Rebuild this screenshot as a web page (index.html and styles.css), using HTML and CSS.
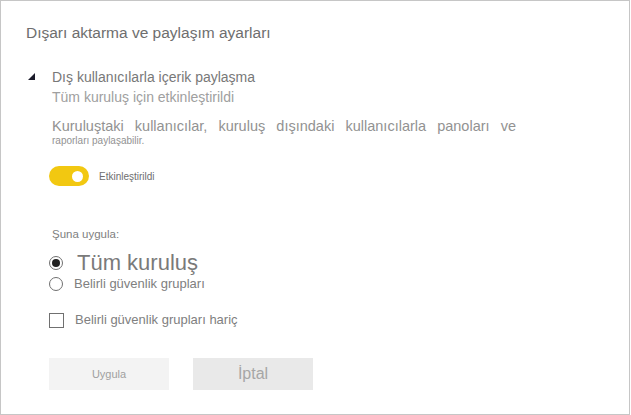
FILE: index.html
```html
<!DOCTYPE html>
<html lang="tr">
<head>
<meta charset="utf-8">
<link rel="stylesheet" href="styles.css">
</head>
<body>
<div class="panel">
  <h1 class="title">Dışarı aktarma ve paylaşım ayarları</h1>
  <div class="section">
    <div class="caret"><svg width="7" height="7" viewBox="0 0 7 7"><polygon points="7,0 7,7 0,7" fill="#1b1b2a"/></svg></div>
    <div class="section-body">
      <div class="section-name">Dış kullanıcılarla içerik paylaşma</div>
      <div class="section-state">Tüm kuruluş için etkinleştirildi</div>
      <div class="desc">Kuruluştaki kullanıcılar, kuruluş dışındaki kullanıcılarla panoları ve</div>
      <div class="desc-small">raporları paylaşabilir.</div>
    </div>
  </div>
  <div class="toggle-row">
    <span class="toggle"><span class="knob"></span></span>
    <span class="toggle-label">Etkinleştirildi</span>
  </div>
  <div class="apply-label">Şuna uygula:</div>
  <div class="option option-big">
    <span class="radio checked"></span>
    <span class="big-label">Tüm kuruluş</span>
  </div>
  <div class="option option-second">
    <span class="radio"></span>
    <span class="opt-label">Belirli güvenlik grupları</span>
  </div>
  <div class="option option-check">
    <span class="check"></span>
    <span class="opt-label">Belirli güvenlik grupları hariç</span>
  </div>
  <div class="buttons">
    <button class="btn btn-apply">Uygula</button>
    <button class="btn btn-cancel">İptal</button>
  </div>
</div>
</body>
</html>
```
FILE: styles.css
```css
html, body {
  margin: 0;
  padding: 0;
  background: #fff;
}
body {
  font-family: "Liberation Sans", Arial, sans-serif;
  color: #7a7a7a;
}
.panel {
  width: 630px;
  height: 415px;
  box-sizing: border-box;
  border: 1px solid #c6c6c6;
  padding: 22px 0 0 25px;
}
.title {
  margin: 0;
  font-size: 15.5px;
  font-weight: normal;
  line-height: 20px;
  color: #6e6e6e;
}
.section {
  display: flex;
  margin-top: 24px;
  margin-left: 2px;
}
.caret {
  width: 24px;
  padding-top: 6px;
}
.caret svg { display: block; }
.section-body {
  display: flex;
  flex-direction: column;
}
.section-name {
  font-size: 14px;
  line-height: 20px;
  color: #787878;
}
.section-state {
  font-size: 14px;
  line-height: 20px;
  color: #a0a0a0;
}
.desc {
  margin-top: 10px;
  width: 464px;
  font-size: 14.5px;
  line-height: 18px;
  color: #929292;
  text-align: justify;
  text-align-last: justify;
}
.desc-small {
  font-size: 10px;
  line-height: 12px;
  color: #929292;
}
.toggle-row {
  display: flex;
  align-items: center;
  gap: 10px;
  margin-top: 19px;
  margin-left: 23px;
}
.toggle {
  display: flex;
  justify-content: flex-end;
  align-items: center;
  width: 40px;
  height: 20px;
  box-sizing: border-box;
  padding-right: 6px;
  border-radius: 10px;
  background: #f2c811;
}
.knob {
  width: 11px;
  height: 11px;
  border-radius: 50%;
  background: #fff;
}
.toggle-label {
  font-size: 10px;
  color: #6e6e6e;
}
.apply-label {
  margin-top: 41px;
  margin-left: 26px;
  font-size: 11.5px;
  line-height: 14px;
  color: #808080;
}
.option {
  display: flex;
  align-items: center;
  gap: 11px;
  margin-left: 23px;
}
.option-big {
  margin-top: 11px;
  gap: 14px;
}
.option-second {
  margin-top: 2px;
}
.option-check {
  margin-top: 20px;
}
.radio {
  width: 14px;
  height: 14px;
  box-sizing: border-box;
  border: 1px solid #707070;
  border-radius: 50%;
  display: flex;
  align-items: center;
  justify-content: center;
}
.radio.checked::after {
  content: "";
  width: 8px;
  height: 8px;
  border-radius: 50%;
  background: #222;
}
.check {
  width: 15px;
  height: 15px;
  box-sizing: border-box;
  border: 1px solid #707070;
}
.big-label {
  font-size: 22px;
  line-height: 22px;
  color: #7a7a7a;
}
.opt-label {
  font-size: 13px;
  line-height: 16px;
  color: #808080;
}
.buttons {
  display: flex;
  gap: 24px;
  margin-top: 30px;
  margin-left: 23px;
}
.btn {
  width: 120px;
  height: 32px;
  border: none;
  margin: 0;
  padding: 0;
  font-family: "Liberation Sans", Arial, sans-serif;
}
.btn-apply {
  background: #f3f3f3;
  color: #a0a0a0;
  font-size: 11px;
}
.btn-cancel {
  background: #e9e9e9;
  color: #a6a6a6;
  font-size: 16px;
}
```
